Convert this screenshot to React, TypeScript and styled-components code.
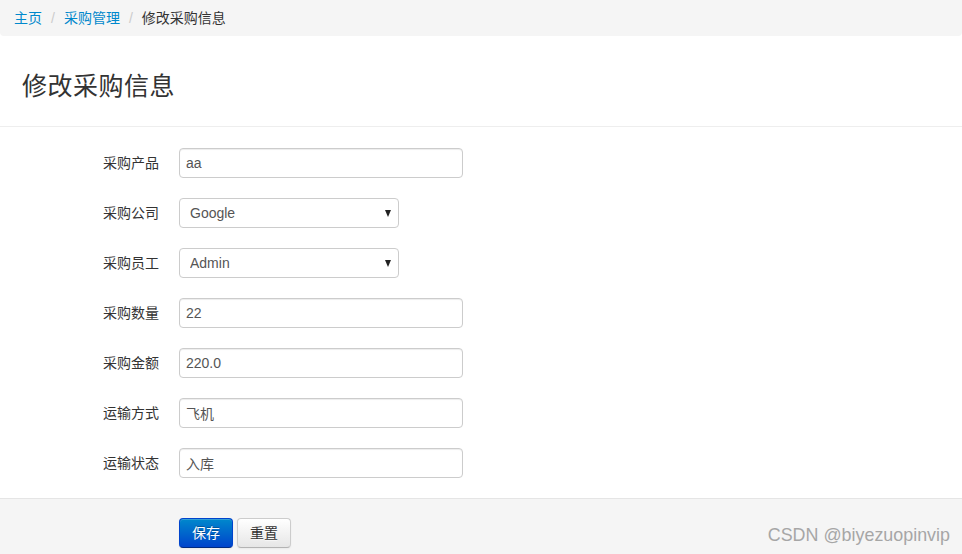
import styled, { createGlobalStyle } from "styled-components";

const GlobalStyle = createGlobalStyle`
  html, body {
    margin: 0;
    padding: 0;
    background: #fff;
    overflow: hidden;
  }
  body {
    font-family: "Liberation Sans", "Noto Sans CJK SC", sans-serif;
    font-size: 14px;
    line-height: 20px;
    color: #333;
  }
`;

const Page = styled.div`
  position: relative;
  width: 962px;
  height: 554px;
  overflow: hidden;
`;

const Breadcrumb = styled.ul`
  list-style: none;
  margin: 0;
  padding: 8px 14px;
  height: 20px;
  background: #f5f5f5;
  border-radius: 0 0 4px 4px;
  display: flex;
  align-items: center;
`;

const Crumb = styled.li<{ active?: boolean }>`
  color: ${p => (p.active ? "#333" : "#0088cc")};
  display: flex;
  align-items: center;
`;

const Divider = styled.span`
  color: #ccc;
  padding: 0 9px;
`;

const Header = styled.div`
  height: 55px;
  padding: 35px 22px 0;
  border-bottom: 1px solid #eee;
`;

const Title = styled.h2`
  margin: 0;
  font-size: 25px;
  font-weight: normal;
  color: #333;
  line-height: 30px;
  letter-spacing: 0.5px;
`;

const Form = styled.form`
  padding-top: 21px;
`;

const Group = styled.div`
  display: flex;
  align-items: center;
  margin-bottom: 20px;
`;

const Label = styled.label`
  width: 159px;
  text-align: right;
  padding-right: 20px;
  color: #333;
`;

const Input = styled.input<{ w?: number }>`
  box-sizing: border-box;
  width: ${p => p.w ?? 284}px;
  height: 30px;
  padding: 4px 6px;
  border: 1px solid #ccc;
  border-radius: 4px;
  box-shadow: inset 0 1px 1px rgba(0, 0, 0, 0.075);
  font-family: "Liberation Sans", "Noto Sans CJK SC", sans-serif;
  font-size: 14px;
  color: #555;
  background: #fff;
  outline: none;
`;

const SelectWrap = styled.div`
  position: relative;
  width: 220px;
  &::after {
    content: "";
    position: absolute;
    right: 8px;
    top: 12px;
    border-left: 3.5px solid transparent;
    border-right: 3.5px solid transparent;
    border-top: 7px solid #222;
    pointer-events: none;
  }
`;

const Select = styled.select`
  appearance: none;
  -webkit-appearance: none;
  box-sizing: border-box;
  width: 220px;
  height: 30px;
  padding: 4px 10px;
  border: 1px solid #ccc;
  border-radius: 4px;
  background: #fff;
  font-family: "Liberation Sans", "Noto Sans CJK SC", sans-serif;
  font-size: 14px;
  color: #555;
  outline: none;
`;

const Actions = styled.div`
  margin-top: 20px;
  padding: 19px 20px 20px 179px;
  background: #f5f5f5;
  border-top: 1px solid #e5e5e5;
  display: flex;
  gap: 4px;
  height: 60px;
`;

const Button = styled.button<{ primary?: boolean }>`
  box-sizing: border-box;
  height: 30px;
  padding: 4px 12px;
  font-family: "Liberation Sans", "Noto Sans CJK SC", sans-serif;
  font-size: 14px;
  line-height: 20px;
  border-radius: 4px;
  cursor: pointer;
  border: 1px solid ${p => (p.primary ? "#0044cc" : "#ccc")};
  border-bottom-color: ${p => (p.primary ? "#002a80" : "#b3b3b3")};
  color: ${p => (p.primary ? "#fff" : "#333")};
  background: ${p =>
    p.primary
      ? "linear-gradient(to bottom, #0088cc, #0044cc)"
      : "linear-gradient(to bottom, #ffffff, #e6e6e6)"};
  box-shadow: inset 0 1px 0 rgba(255, 255, 255, 0.2), 0 1px 2px rgba(0, 0, 0, 0.05);
  text-shadow: ${p => (p.primary ? "0 -1px 0 rgba(0,0,0,0.25)" : "0 1px 1px rgba(255,255,255,0.75)")};
`;

const Watermark = styled.div`
  position: absolute;
  right: 12px;
  bottom: 9px;
  font-size: 17.9px;
  color: #999;
  opacity: 0.85;
`;

const fields = [
  { label: "采购产品", value: "aa" },
  { label: "采购公司", value: "Google", options: ["Google"] },
  { label: "采购员工", value: "Admin", options: ["Admin"] },
  { label: "采购数量", value: "22" },
  { label: "采购金额", value: "220.0" },
  { label: "运输方式", value: "飞机" },
  { label: "运输状态", value: "入库" },
];

function App() {
  return (
    <Page>
      <GlobalStyle />
      <Breadcrumb>
        <Crumb>主页<Divider>/</Divider></Crumb>
        <Crumb>采购管理<Divider>/</Divider></Crumb>
        <Crumb active>修改采购信息</Crumb>
      </Breadcrumb>
      <Header>
        <Title>修改采购信息</Title>
      </Header>
      <Form onSubmit={e => e.preventDefault()}>
        {fields.map(f => (
          <Group key={f.label}>
            <Label>{f.label}</Label>
            {f.options ? (
              <SelectWrap>
                <Select defaultValue={f.value}>
                  {f.options.map(o => (
                    <option key={o}>{o}</option>
                  ))}
                </Select>
              </SelectWrap>
            ) : (
              <Input type="text" defaultValue={f.value} />
            )}
          </Group>
        ))}
        <Actions>
          <Button primary type="submit">保存</Button>
          <Button type="reset">重置</Button>
        </Actions>
      </Form>
      <Watermark>CSDN @biyezuopinvip</Watermark>
    </Page>
  );
}

export default App;
